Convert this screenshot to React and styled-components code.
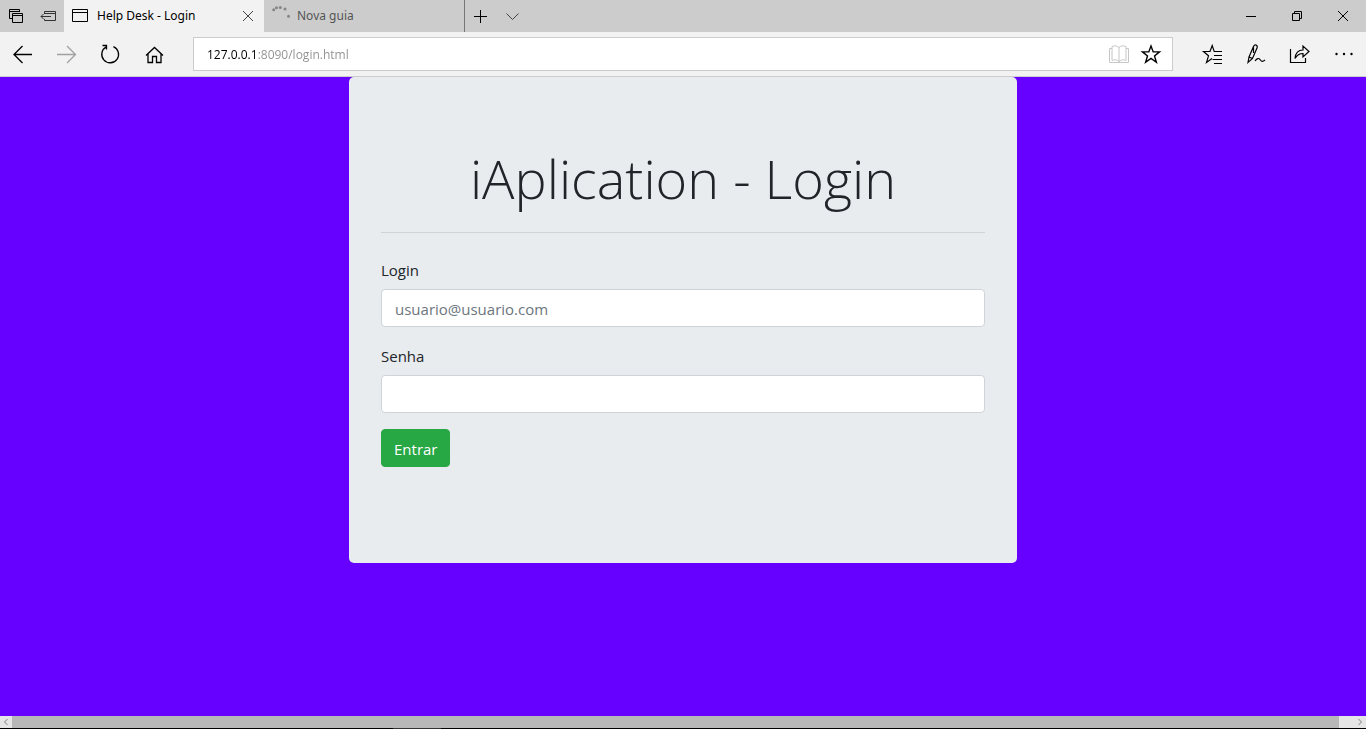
import React from 'react';
import styled, { createGlobalStyle } from 'styled-components';

const GlobalStyle = createGlobalStyle`
  *, *::before, *::after { box-sizing: border-box; }
  body {
    margin: 0;
    font-family: 'Open Sans', 'Noto Sans', sans-serif;
    font-size: 15px;
    line-height: 24px;
    color: #212529;
    background: #6600ff;
  }
  button, input { font-family: inherit; }
`;

const Window = styled.div`
  display: flex;
  flex-direction: column;
  min-height: 100vh;
`;

const TabStrip = styled.header`
  display: flex;
  height: 32px;
  background: #cccccc;
`;

const IconButton = styled.button`
  display: flex;
  flex: none;
  align-items: center;
  justify-content: center;
  width: ${({ $width }) => $width}px;
  padding: 0;
  border: 0;
  background: transparent;
  color: ${({ $color }) => $color || '#000000'};
`;

const Tab = styled.div`
  display: flex;
  align-items: center;
  width: 200px;
  padding-left: 8px;
  font-family: 'Noto Sans', 'Open Sans', sans-serif;
  font-size: 12px;
  background: ${({ $active }) => ($active ? '#f2f2f2' : '#cccccc')};
  color: ${({ $active }) => ($active ? '#000000' : '#555555')};
`;

const TabTitle = styled.span`
  flex: 1;
  margin-left: 9px;
  white-space: nowrap;
`;

const TabActions = styled.div`
  display: flex;
  border-left: 1px solid #767676;
`;

const WindowControls = styled.div`
  display: flex;
  margin-left: auto;
`;

const Toolbar = styled.nav`
  display: flex;
  height: 45px;
  border-bottom: 1px solid #cccccc;
  background: #f2f2f2;
`;

const AddressBar = styled.div`
  display: flex;
  flex: 1;
  height: 34px;
  margin: 5px 17px;
  padding-right: 5px;
  border: 1px solid #cccccc;
  background: #ffffff;
`;

const AddressInput = styled.input`
  flex: 1;
  min-width: 0;
  margin-left: 13px;
  padding: 0;
  border: 0;
  outline: 0;
  font-size: 12px;
  background: linear-gradient(90deg, #000000 50px, #8f8f8f 50px);
  background-clip: text;
  -webkit-text-fill-color: transparent;
`;

const Page = styled.main`
  flex: 1;
  background: #6600ff;
`;

const LoginCard = styled.section`
  max-width: 668px;
  margin: 0 auto;
  padding: 68px 32px 96px;
  border-radius: 5px;
  background: #e8ecef;
`;

const Title = styled.h1`
  margin: 0 0 20px;
  font-size: 54px;
  font-weight: 300;
  line-height: 67px;
  text-align: center;
`;

const Divider = styled.hr`
  margin: 0 0 24px;
  border: 0;
  border-top: 1px solid #cfd3d6;
`;

const Field = styled.div`
  display: flex;
  flex-direction: column;
  gap: 8px;
  margin-bottom: 16px;
`;

const Label = styled.label`
  align-self: flex-start;
  padding-top: 2px;
  line-height: 22px;
`;

const TextInput = styled.input`
  height: 38px;
  padding: 2px 13px 0;
  border: 1px solid #ced4da;
  border-radius: 4px;
  background: #ffffff;
  color: #495057;
  font-size: 15px;
  &::placeholder { color: #6c757d; opacity: 1; }
`;

const SubmitButton = styled.button`
  display: block;
  height: 38px;
  padding: 2px 12px 1px;
  border: 1px solid #28a745;
  border-radius: 4px;
  background: #28a745;
  color: #ffffff;
  font-size: 15px;
`;

const ScrollBar = styled.div`
  display: flex;
  height: 12px;
  background: #e6e6e6;
`;

const ScrollThumb = styled.div`
  flex: 1;
  margin-right: 15px;
  background: #b8b8b8;
`;

const TaskbarEdge = styled.footer`
  height: 1px;
  padding-left: 393px;
  background: #000000;
`;

const ActiveTask = styled.div`
  width: 48px;
  height: 1px;
  background: #333333;
`;

const Drawing = styled.svg`
  flex: none;
  overflow: visible;
`;

const Icon = ({ size = 20, width = 1, children }) => (
  <Drawing width={size} height={size} viewBox={`0 0 ${size} ${size}`} fill="none" stroke="currentColor" strokeWidth={width} aria-hidden="true">
    {children}
  </Drawing>
);

const navButtons = [
  { label: 'Voltar', art: <path d="M20 10.5H1.5M10.5 2 2 10.5l8.5 8.5" /> },
  { label: 'Avançar', color: '#a0a0a0', art: <path d="M1 10.5h18.5M11 2l8.5 8.5L11 19" /> },
  { label: 'Atualizar', art: <path d="M13.4 2.6A8.4 8.4 0 1 1 6.3 2.9M2.5 1.5H6.5V5.5" /> },
  { label: 'Início', art: <path d="M2 11.5 10.5 3.5l8.5 8M4 10v8.5h4.5v-6h4v6H17V10" /> },
];

const toolButtons = [
  {
    label: 'Hub',
    art: <path d="M20 7.5H12.2L10.2 1.5 8 7.5H1.5l5 4.3L4.5 18.5l5.5-4M12 11.5h8M10.5 15.5H20M12 19.5h8" />,
  },
  {
    label: 'Anotar',
    art: <path d="M2 18.5 3 13 7.5 2.500Q8.500 .5 10 1q1.800 .8 1 3L6.500 14.500zM3 13l3.500 1.500M7.500 3.500V9M9 17c2-3 4-3 5-1.500s2 3 5 .500" />,
  },
  {
    label: 'Compartilhar',
    art: <path d="M.5 5V18.500H15.500V14M5 14.500C5.500 9 8 6 13 6V2l6 5.500-6 5.500V9.500C9.500 9.500 7 11 5 14.500z" />,
  },
  {
    label: 'Mais',
    art: (
      <g fill="currentColor" stroke="none">
        <circle cx="2.500" cy="10" r="1.200" />
        <circle cx="10" cy="10" r="1.200" />
        <circle cx="17.500" cy="10" r="1.200" />
      </g>
    ),
  },
];

const windowButtons = [
  { label: 'Minimizar', art: <path d="M3 8.500h10" /> },
  { label: 'Restaurar', art: <path d="M3.500 5.500h7v7h-7zM5.500 5.500v-2h7v7h-2" /> },
  { label: 'Fechar', art: <path d="M3 3l10 10M13 3 3 13" /> },
];

export default function App() {
  return (
    <>
      <GlobalStyle />
      <Window>
        <TabStrip>
          <IconButton $width={32} aria-label="Guias reservadas">
            <Icon size={16}><path d="M4 10.500H1.500v-9h10V4M1.500 3.500h10M4.500 5.500h10v9h-10zM4.500 7.500h10" /></Icon>
          </IconButton>
          <IconButton $width={32} aria-label="Reservar guias" $color="#333333">
            <Icon size={16}><path d="M4.500 6V3.500h11v9h-11V11M4.500 5.500h11M11 8.500H1M3.500 6 1 8.500 3.500 11" /></Icon>
          </IconButton>
          <Tab $active>
            <Icon size={16}><path d="M.5 1.500h15v12H.5zM.5 4.500h15" /></Icon>
            <TabTitle>Help Desk - Login</TabTitle>
            <IconButton $width={32} aria-label="Fechar guia" $color="#444444">
              <Icon size={16}><path d="M3 3l10 10M13 3 3 13" /></Icon>
            </IconButton>
          </Tab>
          <Tab>
            <Icon size={16}>
              <g fill="#858585" stroke="none">
                <circle cx="1.700" cy="1.700" r="1.500" />
                <circle cx="4.500" cy="-.2" r="1.500" />
                <circle cx="8.300" cy="-.5" r="1.500" />
                <circle cx="13" cy="1" r="1.500" />
                <circle cx="16.500" cy="8.300" r="1.500" />
              </g>
            </Icon>
            <TabTitle>Nova guia</TabTitle>
          </Tab>
          <TabActions>
            <IconButton $width={32} aria-label="Nova guia">
              <Icon size={16}><path d="M1 8.500h13M7.500 2v13" /></Icon>
            </IconButton>
            <IconButton $width={32} aria-label="Visualizar guias" $color="#444444">
              <Icon size={16}><path d="M1.500 5.500l6 6 6-6" /></Icon>
            </IconButton>
          </TabActions>
          <WindowControls>
            {windowButtons.map(({ label, art }) => (
              <IconButton key={label} $width={46} aria-label={label}><Icon size={16}>{art}</Icon></IconButton>
            ))}
          </WindowControls>
        </TabStrip>
        <Toolbar>
          {navButtons.map(({ label, color, art }) => (
            <IconButton key={label} $width={44} $color={color} aria-label={label}>
              <Icon width={1.3}>{art}</Icon>
            </IconButton>
          ))}
          <AddressBar>
            <AddressInput aria-label="Endereço" defaultValue="127.0.0.1:8090/login.html" />
            <IconButton $width={32} aria-label="Modo de leitura" $color="#c6c6c6">
              <Icon><path d="M10 3.500C8 1.500 5 1.500 3 2.500v14c2-1 5-1 7 1 2-2 5-2 7-1v-14c-2-1-5-1-7 1zM10 3.500v15M3 4.500H.5v14h19v-14H17" /></Icon>
            </IconButton>
            <IconButton $width={32} aria-label="Favoritos">
              <Icon width={1.4}><path d="M10 2l2.200 5.900h6.300l-5 4 1.900 6.300L10 14.400l-5.400 3.800 1.900-6.300-5-4h6.300z" /></Icon>
            </IconButton>
          </AddressBar>
          {toolButtons.map(({ label, art }) => (
            <IconButton key={label} $width={44} aria-label={label}>
              <Icon width={1.2}>{art}</Icon>
            </IconButton>
          ))}
        </Toolbar>
        <Page>
          <LoginCard>
            <Title>iAplication - Login</Title>
            <Divider />
            <form onSubmit={(event) => event.preventDefault()}>
              <Field>
                <Label htmlFor="login">Login</Label>
                <TextInput id="login" type="email" placeholder="usuario@usuario.com" />
              </Field>
              <Field>
                <Label htmlFor="senha">Senha</Label>
                <TextInput id="senha" type="password" />
              </Field>
              <SubmitButton type="submit">Entrar</SubmitButton>
            </form>
          </LoginCard>
        </Page>
        <ScrollBar>
          <IconButton $width={12} aria-label="Rolar para a esquerda" $color="#808080">
            <Icon size={12}><path d="M7.500 3 4.500 6l3 3" /></Icon>
          </IconButton>
          <ScrollThumb />
          <IconButton $width={12} aria-label="Rolar para a direita" $color="#808080">
            <Icon size={12}><path d="M4.500 3l3 3-3 3" /></Icon>
          </IconButton>
        </ScrollBar>
        <TaskbarEdge>
          <ActiveTask />
        </TaskbarEdge>
      </Window>
    </>
  );
}
